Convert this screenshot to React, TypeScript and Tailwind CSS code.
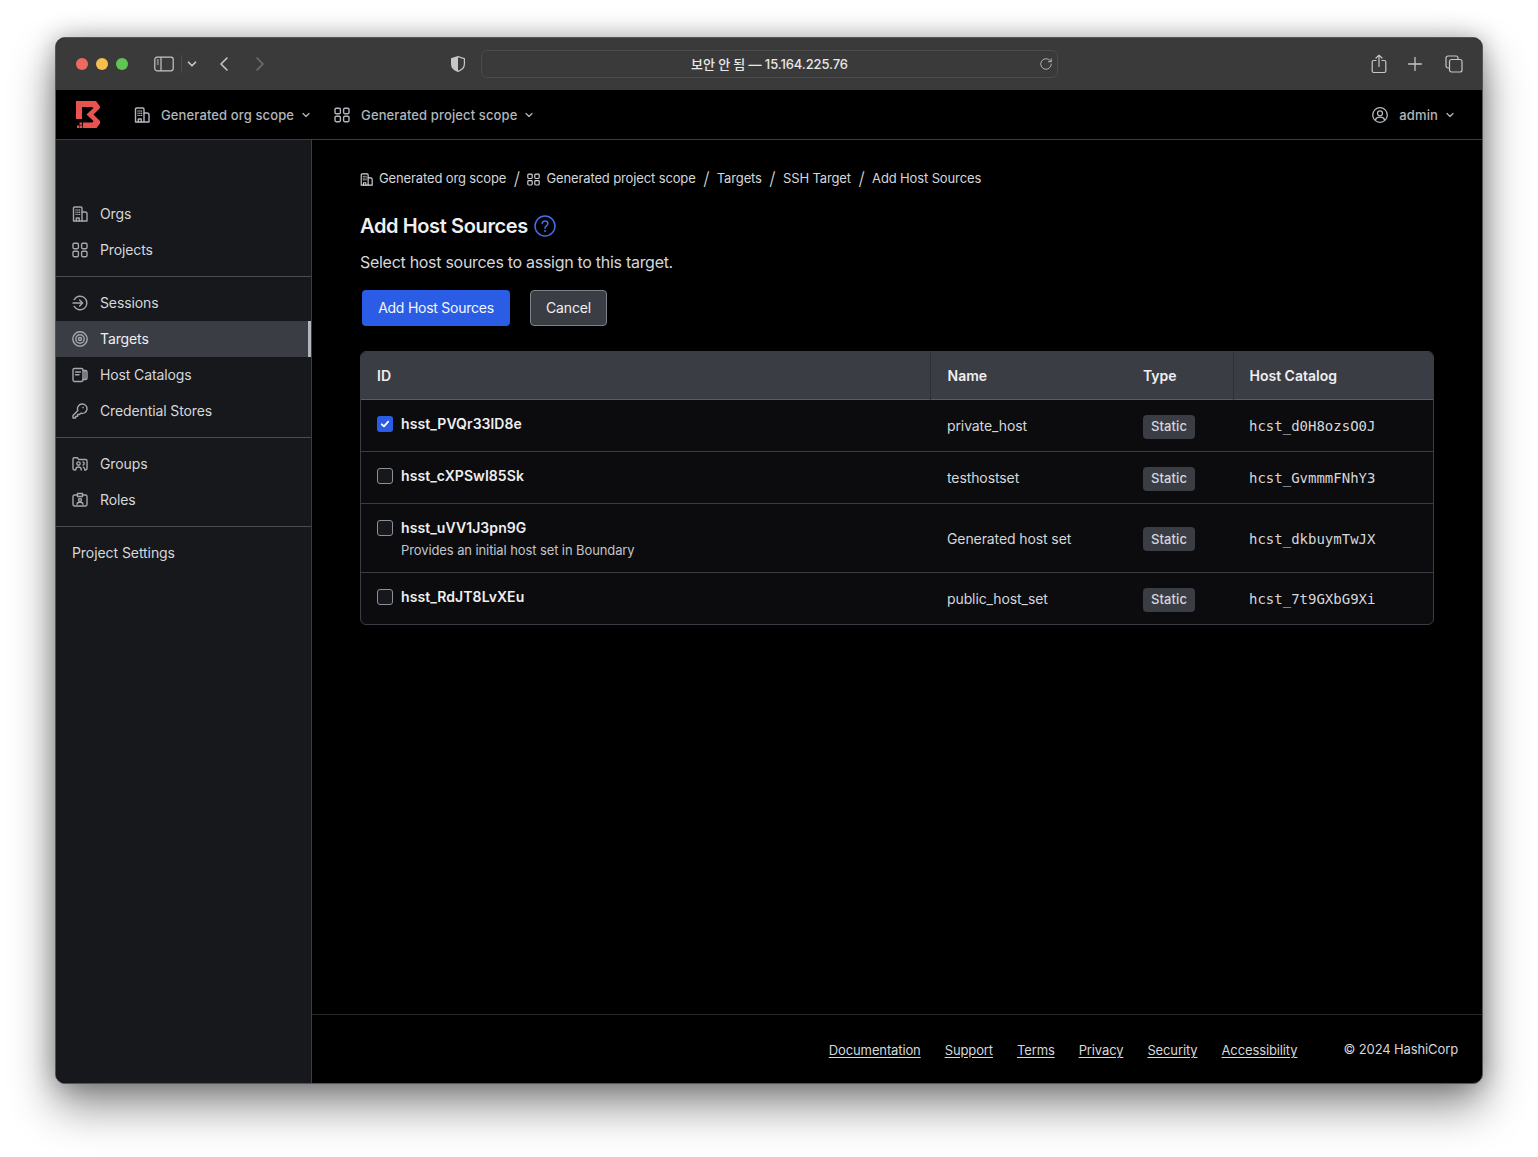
import React from 'react';
import { ChevronDown, ChevronLeft, ChevronRight, Plus, RotateCw } from 'lucide-react';

const ROWS = [
  { id: 'hsst_PVQr33lD8e', name: 'private_host', catalog: 'hcst_d0H8ozsO0J', checked: true, tall: false },
  { id: 'hsst_cXPSwI85Sk', name: 'testhostset', catalog: 'hcst_GvmmmFNhY3', checked: false, tall: false },
  { id: 'hsst_uVV1J3pn9G', name: 'Generated host set', catalog: 'hcst_dkbuymTwJX', checked: false, tall: true },
  { id: 'hsst_RdJT8LvXEu', name: 'public_host_set', catalog: 'hcst_7t9GXbG9Xi', checked: false, tall: false },
];

const FOOTER_LINKS = ['Documentation', 'Support', 'Terms', 'Privacy', 'Security', 'Accessibility'];

type IconProps = { className?: string };

function Svg({ className, children }: IconProps & { children: React.ReactNode }) {
  return (
    <svg viewBox="0 0 16 16" fill="none" stroke="currentColor" strokeWidth="1.4" strokeLinecap="round" strokeLinejoin="round" className={className}>
      {children}
    </svg>
  );
}

function OrgIcon({ className }: IconProps) {
  return (
    <Svg className={className}>
      <path d="M1.500 15V2.200C1.500 1.500 2 1 2.700 1h6.100C9.500 1 10 1.500 10 2.200V15H1.500Z" />
      <path d="M10 6h3c1.100 0 2 .9 2 2v7h-5" />
      <path d="M4.300 15v-3h2.900v3" />
      <path d="M4 4h.1M5.800 4h.1M7.500 4h.1M4 6.200h.1M5.800 6.200h.1M7.500 6.200h.1M4 8.400h.1M5.800 8.400h.1M7.500 8.400h.1" strokeWidth="1.400" />
    </Svg>
  );
}

function GridIcon({ className }: IconProps) {
  return (
    <Svg className={className}>
      <rect x="1" y="1.300" width="5.400" height="5.400" rx="1.100" />
      <rect x="9.600" y="1.300" width="5.400" height="5.400" rx="1.100" />
      <rect x="1" y="9.300" width="5.400" height="5.400" rx="1.100" />
      <rect x="9.600" y="9.300" width="5.400" height="5.400" rx="1.100" />
    </Svg>
  );
}

function SessionIcon({ className }: IconProps) {
  return (
    <Svg className={className}>
      <path d="M2.200 4.600A6.800 6.800 0 1 1 2.200 11.400" />
      <path d="M1 8h9.400M7.600 5l3 3-3 3" />
    </Svg>
  );
}

function TargetIcon({ className }: IconProps) {
  return (
    <Svg className={className}>
      <circle cx="8" cy="8" r="7.200" />
      <circle cx="8" cy="8" r="4.200" />
      <circle cx="8" cy="8" r="1.500" />
    </Svg>
  );
}

function CatalogIcon({ className }: IconProps) {
  return (
    <Svg className={className}>
      <path d="M2.400 1.500h7.200c.8 0 1.400.6 1.400 1.400v10.200c0 .8-.6 1.400-1.400 1.400H2.400c-.8 0-1.400-.6-1.400-1.400V2.900c0-.8.600-1.400 1.400-1.400Z" />
      <path d="M11 3.500h2.400c.9 0 1.600.7 1.600 1.600v5.800c0 .9-.7 1.600-1.600 1.600H11M13 3.600v8.800" />
      <path d="M3.500 5h5M3.500 7.800h3.500" />
    </Svg>
  );
}

function KeyIcon({ className }: IconProps) {
  return (
    <Svg className={className}>
      <path d="M10.300 1a4.700 4.700 0 1 1-1.500 9.150L7.400 11.500H5.500v1.900H3.600V15H1v-2.600l4.850-4.900A4.700 4.700 0 0 1 10.300 1Z" />
      <path d="M11 4.600h.1" strokeWidth="1.600" />
    </Svg>
  );
}

function GroupIcon({ className }: IconProps) {
  return (
    <Svg className={className}>
      <path d="M3 14H2.400C1.600 14 1 13.400 1 12.600V3C1 2.300 1.500 1.800 2.200 1.800h3.100l1.500 1.700h6.800c.8 0 1.400.6 1.400 1.400v7.700c0 .8-.6 1.400-1.400 1.400h-.5" />
      <circle cx="6.500" cy="7.600" r="1.700" />
      <path d="M11 6a1.600 1.600 0 0 1 0 3.100M3.700 14c0-1.900 1.200-3 2.800-3s2.800 1.100 2.800 3M11.300 11.200c1 .3 1.500 1.300 1.500 2.800" />
    </Svg>
  );
}

function RoleIcon({ className }: IconProps) {
  return (
    <Svg className={className}>
      <path d="M5.500 3H2.400C1.600 3 1 3.600 1 4.400v8.200c0 .8.600 1.400 1.400 1.400h11.200c.8 0 1.400-.6 1.400-1.400V4.400c0-.8-.6-1.400-1.400-1.400h-3.100" />
      <path d="M5.500 1.500h5V4.500h-5z" />
      <circle cx="8" cy="8" r="1.500" />
      <path d="M5 12.200c.3-1.300 1.500-1.900 3-1.900s2.700.6 3 1.900" />
    </Svg>
  );
}

function BoundaryLogo() {
  return (
    <svg viewBox="0 0 24 27" className="h-[27px] w-6" fill="#e9534f">
      <path d="M0 0H20L24 5.500V7L17.500 13.500 24 20V22.500L20.500 27H7V21.500H16.500L17.500 20 10.500 13.500 17.500 7 16 6H6V18H0Z" />
      <rect x="1" y="24.500" width="2.500" height="2.500" />
      <rect x="4" y="24.500" width="2.300" height="2.500" />
      <rect x="3.500" y="21.500" width="2.500" height="2.300" />
    </svg>
  );
}

function NavItem({ icon, label, active }: { icon: React.ReactNode; label: string; active?: boolean }) {
  return (
    <a className={`flex h-9 items-center gap-[12px] pl-4 text-sm tracking-[-0.12px] ${active ? 'border-r-[3px] border-[#b2b6bd] bg-[#3b3d45] text-[#efeff1]' : 'text-[#d5d7db]'}`}>
      <span className="flex w-4 justify-center text-[#a3a7ae]">{icon}</span>
      {label}
    </a>
  );
}

function Checkbox({ checked }: { checked: boolean }) {
  if (checked) {
    return (
      <span className="flex h-4 w-4 shrink-0 items-center justify-center rounded-[3px] bg-[#2b5ce6] text-white">
        <svg viewBox="0 0 12 12" className="h-3 w-3" fill="none" stroke="currentColor" strokeWidth="1.800" strokeLinecap="round" strokeLinejoin="round">
          <path d="M2.800 6.300 5 8.400l4.200-4.700" />
        </svg>
      </span>
    );
  }
  return <span className="h-4 w-4 shrink-0 rounded-[3px] border border-[#8c909c] bg-[#17181c]" />;
}

function BrowserBar() {
  return (
    <div className="flex h-[52px] shrink-0 items-center bg-[#3a3a3a] pl-[20px] text-[#c6c6c6]">
      <div className="flex gap-[8px]">
        <span className="h-3 w-3 rounded-full bg-[#ec6a5e]" />
        <span className="h-3 w-3 rounded-full bg-[#f4bf4f]" />
        <span className="h-3 w-3 rounded-full bg-[#61c554]" />
      </div>
      <svg viewBox="0 0 20 16" className="ml-[26px] h-4 w-5" fill="none" stroke="currentColor" strokeWidth="1.200">
        <rect x="0.800" y="1.200" width="18.400" height="13.600" rx="2.200" />
        <path d="M7 1.200v13.600" />
        <path d="M2.800 4h2M2.800 6h2M2.800 8h2" strokeWidth="1" />
      </svg>
      <div className="ml-[7px] h-[18px] w-px bg-[#4c4c4c]" />
      <ChevronDown className="ml-[3px] h-[14px] w-[14px]" strokeWidth={3} />
      <ChevronLeft className="ml-[13px] h-6 w-6" strokeWidth={1.600} />
      <ChevronRight className="ml-[12px] h-6 w-6 text-[#6f6f6f]" strokeWidth={1.600} />
      <svg viewBox="0 0 14 16" className="ml-[179px] h-4 w-[14px]">
        <path d="M7 .6 13.400 2.600V8c0 3.400-2.400 6-6.400 7.400C3 14 .6 11.400.6 8V2.600Z" fill="none" stroke="#c6c6c6" strokeWidth="1.200" />
        <path d="M7 .6.6 2.600V8c0 3.400 2.400 6 6.400 7.400Z" fill="#c6c6c6" />
      </svg>
      <div className="relative ml-[16px] flex h-[28px] w-[577px] items-center justify-center rounded-md border border-[#4c4c4c] pt-px font-['Inter','Noto_Sans_CJK_KR',sans-serif] text-[13px] font-medium text-[#e8e8e8]">
        <span className="tracking-[-0.1px]">보안 안 됨 — 15.164.225.76</span>
        <RotateCw className="absolute right-[4px] top-[6px] h-[14px] w-[14px] text-[#c6c6c6]" strokeWidth={1.400} />
      </div>
      <div className="ml-auto flex items-center pr-[19px]">
        <svg viewBox="0 0 16 20" className="mr-[17px] h-5 w-4" fill="none" stroke="currentColor" strokeWidth="1.200" strokeLinecap="round" strokeLinejoin="round">
          <path d="M5 6.500H2.600c-.9 0-1.400.5-1.400 1.400v9.200c0 .9.500 1.400 1.400 1.400h10.800c.9 0 1.400-.5 1.400-1.400V7.900c0-.9-.5-1.400-1.400-1.400H11" />
          <path d="M8 12.500V1.200M5 4l3-2.900L11 4" />
        </svg>
        <Plus className="mr-[19px] h-[22px] w-[22px]" strokeWidth={1.400} />
        <svg viewBox="0 0 18 18" className="h-[18px] w-[18px]" fill="none" stroke="currentColor" strokeWidth="1.200">
          <path d="M4.500 13H3a2 2 0 0 1-2-2V3a2 2 0 0 1 2-2h8a2 2 0 0 1 2 2v1.500" />
          <rect x="4.500" y="4.500" width="12.500" height="12.500" rx="2" />
        </svg>
      </div>
    </div>
  );
}

function TopNav() {
  return (
    <header className="flex h-[50px] shrink-0 items-center border-b border-[#3b3d45] bg-black pl-[20px] text-[13px] font-medium tracking-[0.12px] text-[#b2b6bd]">
      <BoundaryLogo />
      <div className="ml-[34px] flex items-center pt-px">
        <OrgIcon className="h-4 w-4" />
        <span className="ml-[11px] pt-[2px]">Generated org scope</span>
        <ChevronDown className="ml-[6px] h-3 w-3" strokeWidth={2.500} />
      </div>
      <div className="ml-[22px] flex items-center pt-px">
        <GridIcon className="h-4 w-4" />
        <span className="ml-[11px] pt-[2px]">Generated project scope</span>
        <ChevronDown className="ml-[6px] h-3 w-3" strokeWidth={2.500} />
      </div>
      <div className="ml-auto flex items-center pr-[26px] pt-px">
        <svg viewBox="0 0 16 16" className="h-4 w-4" fill="none" stroke="currentColor" strokeWidth="1.300">
          <circle cx="8" cy="8" r="7.300" />
          <circle cx="8" cy="6.300" r="2.500" />
          <path d="M3.300 13c.6-1.800 2.400-2.800 4.700-2.800s4.100 1 4.700 2.800" />
        </svg>
        <span className="ml-[11px] pt-[2px]">admin</span>
        <ChevronDown className="ml-[6px] h-3 w-3" strokeWidth={2.500} />
      </div>
    </header>
  );
}

function Sidebar() {
  return (
    <aside className="flex w-[256px] shrink-0 flex-col border-r border-[#3b3d45] bg-[#17181c]">
      <nav className="border-b border-[#4a4c55] pb-[8px] pt-[56px]">
        <NavItem icon={<OrgIcon className="h-4 w-4" />} label="Orgs" />
        <NavItem icon={<GridIcon className="h-4 w-4" />} label="Projects" />
      </nav>
      <nav className="border-b border-[#4a4c55] py-[8px]">
        <NavItem icon={<SessionIcon className="h-4 w-4" />} label="Sessions" />
        <NavItem icon={<TargetIcon className="h-4 w-4" />} label="Targets" active />
        <NavItem icon={<CatalogIcon className="h-4 w-4" />} label="Host Catalogs" />
        <NavItem icon={<KeyIcon className="h-4 w-4" />} label="Credential Stores" />
      </nav>
      <nav className="border-b border-[#4a4c55] py-[8px]">
        <NavItem icon={<GroupIcon className="h-4 w-4" />} label="Groups" />
        <NavItem icon={<RoleIcon className="h-4 w-4" />} label="Roles" />
      </nav>
      <a className="mt-[8px] flex h-9 items-center pl-4 text-sm tracking-[-0.07px] text-[#d5d7db]">Project Settings</a>
    </aside>
  );
}

function Breadcrumbs() {
  const sep = <span className="mx-[7.500px] text-[18px] font-light leading-5 text-[#d5d7db]">/</span>;
  return (
    <div className="flex h-5 items-center text-[13px] tracking-[-0.13px] text-[#d5d7db]">
      <OrgIcon className="mr-[6px] h-[13px] w-[13px]" />
      <span>Generated org scope</span>
      {sep}
      <GridIcon className="mr-[6px] h-[13px] w-[13px]" />
      <span>Generated project scope</span>
      {sep}
      <span>Targets</span>
      {sep}
      <span>SSH Target</span>
      {sep}
      <span>Add Host Sources</span>
    </div>
  );
}

function HostTable() {
  return (
    <div className="mt-[25px] overflow-hidden rounded-md border border-[#3b3d45] bg-[#0c0c0e]">
      <table className="w-full table-fixed border-collapse text-left text-sm">
        <colgroup>
          <col className="w-[569px]" />
          <col className="w-[197px]" />
          <col className="w-[106px]" />
          <col />
        </colgroup>
        <thead>
          <tr className="h-[47px] border-b border-[#5a5d66] bg-[#3b3d45] font-semibold text-[#efeff1]">
            <th className="border-r border-[#2e3037] pl-4 pt-[2px] font-semibold">ID</th>
            <th className="pl-[17px] pt-[2px] font-semibold">Name</th>
            <th className="border-r border-[#2e3037] pl-4 pt-[2px] font-semibold">Type</th>
            <th className="pl-4 pt-[2px] font-semibold">Host Catalog</th>
          </tr>
        </thead>
        <tbody>
          {ROWS.map((row, i) => (
            <tr key={row.id} className={`${row.tall ? 'h-[69px]' : 'h-[52px]'} ${i < ROWS.length - 1 ? 'border-b border-[#3b3d45]' : ''}`}>
              <td className="pl-4 align-top">
                <div className="mt-[16px] flex items-center gap-2">
                  <Checkbox checked={row.checked} />
                  <span className="font-semibold leading-4 tracking-[0.07px] text-[#efeff1]">{row.id}</span>
                </div>
                {row.tall && <div className="ml-6 mt-[6px] text-[13px] leading-4 tracking-[-0.1px] text-[#c2c5cb]">Provides an initial host set in Boundary</div>}
              </td>
              <td className={`pl-[17px] tracking-[-0.1px] text-[#d5d7db] ${row.tall ? 'pt-[3px]' : 'pt-px'}`}>{row.name}</td>
              <td className="pl-4 pt-[3px]">
                <span className="inline-flex h-6 items-center rounded-[4px] bg-[#3b3d45] px-2 text-[13px] font-medium tracking-[0.1px] text-[#d5d7db]">Static</span>
              </td>
              <td className={`pl-4 font-['DejaVu_Sans_Mono',monospace] text-sm text-[#d5d7db] ${row.tall ? 'pt-[3px]' : 'pt-px'}`}>{row.catalog}</td>
            </tr>
          ))}
        </tbody>
      </table>
    </div>
  );
}

function Footer() {
  return (
    <footer className="flex h-[69px] shrink-0 items-start justify-end border-t border-[#26272c] pr-[24px] pt-[25px] text-[13px] tracking-[-0.12px] text-[#d5d7db]">
      <div className="flex gap-[24px] pt-px">
        {FOOTER_LINKS.map((link) => (
          <a key={link} className="underline underline-offset-2">{link}</a>
        ))}
      </div>
      <span className="ml-[46px]">© 2024 HashiCorp</span>
    </footer>
  );
}

export default function App() {
  return (
    <div className="h-[1157px] overflow-hidden bg-white pl-[55px] pt-[37px] font-['Inter',sans-serif]">
      <div className="flex h-[1047px] w-[1428px] flex-col overflow-hidden rounded-[10px] border border-[#555555] bg-black shadow-[0_22px_45px_rgba(0,0,0,0.45),0_0_24px_rgba(0,0,0,0.28)]">
        <BrowserBar />
        <TopNav />
        <div className="flex min-h-0 flex-1">
          <Sidebar />
          <main className="flex min-w-0 flex-1 flex-col">
            <div className="flex-1 pl-[48px] pr-[48px] pt-[29px]">
              <Breadcrumbs />
              <h1 className="mt-[23px] flex items-center gap-[6px] text-xl font-semibold leading-7 tracking-[-0.37px] text-[#efeff1]">
                Add Host Sources
                <svg viewBox="0 0 22 22" className="h-[22px] w-[22px] text-[#3f6fe8]" fill="none" stroke="currentColor" strokeWidth="1.500" strokeLinecap="round">
                  <circle cx="11" cy="11" r="10" />
                  <path d="M8.200 8.500C8.400 7 9.500 6.100 11 6.100c1.700 0 2.900 1 2.900 2.500 0 2.300-2.900 2.400-2.900 4.600" />
                  <path d="M11 16h.1" strokeWidth="1.900" />
                </svg>
              </h1>
              <p className="mt-[10px] text-base leading-6 tracking-[-0.29px] text-[#d5d7db]">Select host sources to assign to this target.</p>
              <div className="mt-4 flex gap-5 pl-[2px]">
                <button className="h-9 w-[148px] rounded-[4px] bg-[#2b5ce6] text-sm tracking-[-0.25px] text-[#f5f6fa]">Add Host Sources</button>
                <button className="h-9 w-[77px] rounded-[4px] border border-[#7d818b] bg-[#3b3d45] text-sm tracking-[-0.15px] text-[#efeff1]">Cancel</button>
              </div>
              <HostTable />
            </div>
            <Footer />
          </main>
        </div>
      </div>
    </div>
  );
}
